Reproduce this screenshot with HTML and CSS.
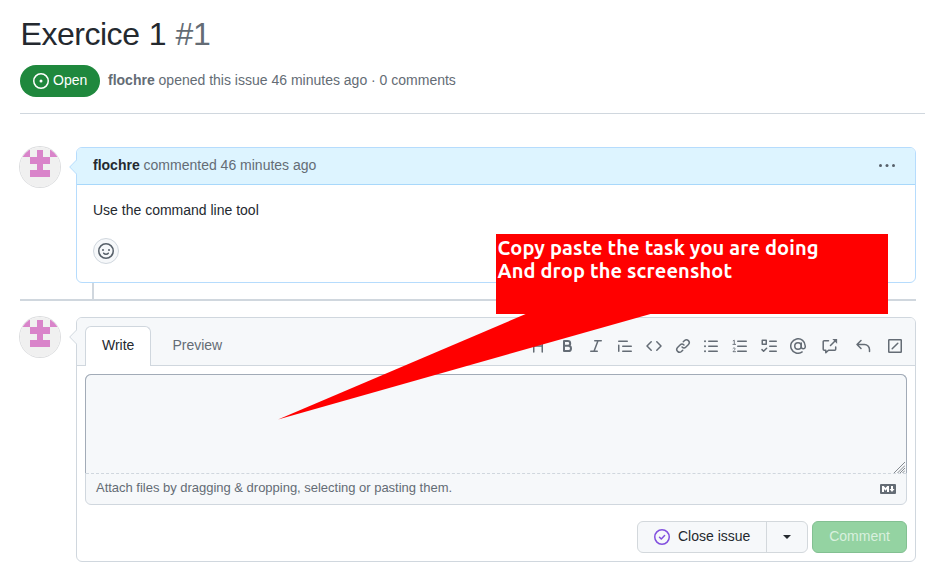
FILE: index.html
```
<!DOCTYPE html>
<html lang="en">
<head>
<meta charset="utf-8">
<title>Exercice 1 · Issue #1</title>
<link rel="stylesheet" href="styles.css">
</head>
<body>
<svg class="sprite" aria-hidden="true">
  <symbol id="avatar" viewBox="0 0 40 40">
    <rect width="40" height="40" fill="#f0f0f0"/>
    <path fill="#d984ca" d="M0 3h10v7H0zM30 3h10v7H30zM17 3h6v7h7v7h-7v6h7v7H10v-7h7v-6h-7v-7h7z"/>
  </symbol>
</svg>
<header class="issue-header">
  <h1 class="title">Exercice 1 <span class="number">#1</span></h1>
  <div class="meta">
    <span class="state"><svg class="icon" viewBox="0 0 16 16"><circle cx="8" cy="8" r="7.25"/><circle class="solid" cx="8" cy="8" r="1.5"/></svg><span class="state-label">Open</span></span>
    <span class="summary"><b>flochre</b> opened this issue 46 minutes ago · 0 comments</span>
  </div>
</header>
<main class="timeline">
  <div class="row">
    <svg class="avatar" viewBox="0 0 40 40"><use href="#avatar" width="40" height="40"/></svg>
    <article class="box comment">
      <svg class="caret" viewBox="0 0 8 16"><path d="M8 0.5 L0.7 8 L8 15.5"/></svg>
      <div class="comment-head">
        <span><b>flochre</b> commented 46 minutes ago</span>
        <svg class="icon kebab" viewBox="0 0 16 16"><g class="solid"><circle cx="1.5" cy="8.5" r="1.5"/><circle cx="8" cy="8.5" r="1.5"/><circle cx="14.5" cy="8.5" r="1.5"/></g></svg>
      </div>
      <div class="comment-body">
        <p>Use the command line tool</p>
        <button class="react" aria-label="Add reaction"><svg class="icon" viewBox="0 0 16 16"><circle cx="8" cy="8" r="7.25"/><circle class="solid" cx="5" cy="7" r="1"/><circle class="solid" cx="11" cy="7" r="1"/><path d="M5.7 10.2c1.1 1.4 3.5 1.4 4.6 0"/></svg></button>
      </div>
    </article>
  </div>
  <div class="thread-line"></div>
  <div class="row">
    <svg class="avatar" viewBox="0 0 40 40"><use href="#avatar" width="40" height="40"/></svg>
    <section class="box editor">
      <svg class="caret" viewBox="0 0 8 16"><path d="M8 0.5 L0.7 8 L8 15.5"/></svg>
      <div class="editor-head">
        <nav class="tabs"><span class="tab active">Write</span><span class="tab">Preview</span></nav>
        <div class="toolbar">
          <svg class="icon" viewBox="0 0 16 16"><path d="M3.75 2v12M12.25 2v12M3.75 8h8.5"/></svg>
          <svg class="icon bold" viewBox="0 0 16 16"><path d="M5 3h3.8a2.4 2.4 0 0 1 0 4.8H5zM5 7.8h4.4a2.6 2.6 0 0 1 0 5.2H5z"/></svg>
          <svg class="icon" viewBox="0 0 16 16"><path d="M6.75 2.75h6.5M2.75 13.25h6.5M10 2.75l-4 10.5"/></svg>
          <svg class="icon" viewBox="0 0 16 16"><path d="M1.75 7.3v6M1.75 3.25h8.5M5.75 8.25h8.5M5.75 13.25h8.5"/></svg>
          <svg class="icon" viewBox="0 0 16 16"><path d="M5.2 3.8 1 8l4.2 4.2M10.8 3.8 15 8l-4.2 4.2"/></svg>
          <svg class="icon" viewBox="0 0 16 16"><path d="M8.3 3.8l1.25-1.25a2.76 2.76 0 0 1 3.9 3.9l-2.5 2.5a2.76 2.76 0 0 1-3.9 0M7.7 12.2l-1.25 1.25a2.76 2.76 0 0 1-3.9-3.9l2.5-2.5a2.76 2.76 0 0 1 3.9 0"/></svg>
          <svg class="icon" viewBox="0 0 16 16"><path d="M5.75 3.25h8.5M5.75 8.25h8.5M5.75 13.25h8.5"/><g class="solid"><circle cx="2" cy="3.25" r="1"/><circle cx="2" cy="8.25" r="1"/><circle cx="2" cy="13.25" r="1"/></g></svg>
          <svg class="icon" viewBox="0 0 16 16"><path d="M5.75 3.25h8.5M5.75 8.25h8.5M5.75 13.25h8.5"/><path class="thin" d="M1.2 2.8l1.1-.6v4M.9 6.4h2.7M1 10.4c.5-.8 2.2-.6 2.2.5 0 .9-1.7 1.5-2.2 2.8h2.5"/></svg>
          <svg class="icon" viewBox="0 0 16 16"><path d="M1.25 2.25h4v4h-4zM1 11.6l1.6 1.6 3-3M8.75 3.25h6.5M8.75 8.25h6.5M8.75 13.25h6.5"/></svg>
          <svg class="icon" viewBox="0 0 16 16"><circle cx="8" cy="8" r="3.25"/><path d="M11.25 5v3.75a1.95 1.95 0 0 0 4 0V8a7.25 7.25 0 1 0-3.1 5.95"/></svg>
          <svg class="icon gap" viewBox="0 0 16 16"><path d="M6.5 2.75H2.2a.95.95 0 0 0-1 1v7.5a1 1 0 0 0 1 1h1.6v2.5l2.7-2.5h6.2a1 1 0 0 0 1-1V9M8.5 7.5l5-5"/><path class="solid" d="M10.3.9h4.8v4.8z"/></svg>
          <svg class="icon gap" viewBox="0 0 16 16"><path d="M6 2.5 2 6.5l4 4M2 6.5h7.5a5 5 0 0 1 5 5v2"/></svg>
          <svg class="icon gap" viewBox="0 0 16 16"><rect x="1.75" y="1.75" width="12.5" height="12.5" rx=".5"/><path d="M5.2 10.8l5.6-5.6"/></svg>
        </div>
      </div>
      <div class="field">
        <div class="input"><svg class="grip" viewBox="0 0 11 11"><path d="M0 11 11 0M3.5 11 11 3.5M6 11l5-5M8.5 11 11 8.5"/></svg></div>
        <div class="attach">
          <span>Attach files by dragging &amp; dropping, selecting or pasting them.</span>
          <svg class="markdown" viewBox="0 0 16 10"><rect width="16" height="10" rx="1" fill="#646c75"/><path fill="#fff" d="M2 8V2h1.800L5.500 4 7.200 2H9v6H7V5L5.500 6.700 4 5v3zM11 2h2v3h1.500L12 8 9.500 5H11z"/></svg>
        </div>
      </div>
      <div class="actions">
        <div class="split"><span class="close"><svg class="icon" viewBox="0 0 16 16"><circle cx="8" cy="8" r="7.250"/><path d="M5.500 8.200l1.800 1.800 3.300-3.400"/></svg>Close issue</span><span class="drop"></span></div>
        <button class="submit">Comment</button>
      </div>
    </section>
  </div>
</main>
<aside class="callout">
  <svg class="pointer" viewBox="0 0 380 108"><path d="M250 0 0 106.500 376 0z"/></svg>
  <div class="line">Copy paste the task you are doing</div>
  <div class="line">And drop the screenshot</div>
</aside>
</body>
</html>
```
FILE: styles.css
```
* { box-sizing: border-box; }
body {
  margin: 0; height: 569px; overflow: hidden; position: relative;
  background: #fff; color: #24292f;
  font: 14px/21px "Liberation Sans", Arial, sans-serif;
}
svg { display: block; flex: none; }
p { margin: 0; }
button { font: inherit; padding: 0; }
.sprite { position: absolute; width: 0; height: 0; }
.icon { width: 16px; height: 16px; fill: none; stroke: currentColor; stroke-width: 1.5; stroke-linecap: round; stroke-linejoin: round; }
.solid { fill: currentColor; stroke: none; }
.issue-header { margin-left: 20px; height: 114px; border-bottom: 1px solid #d0d7de; }
.title { margin: 0; padding: 16px 0 0 .6px; height: 65px; font-size: 32px; line-height: 36px; font-weight: 400; letter-spacing: -.48px; word-spacing: 1px; }
.number { color: #646c75; }
.meta { display: flex; align-items: center; gap: 8px; color: #646c75; }
.state {
  display: flex; align-items: center; gap: 4px; width: 80px; height: 32px;
  padding-left: 13px; border-radius: 16px; background: #1f883d; color: #fff;
}
.state, .summary { line-height: 20px; }
.state-label, .summary { padding-bottom: 2px; }
.timeline { padding: 33px 9px 0 20px; }
.row { display: flex; align-items: flex-start; gap: 16px; }
.avatar { width: 40px; height: 40px; border-radius: 50%; box-shadow: 0 0 0 1px #dcdddf; }
.box { position: relative; flex: 1; border: 1px solid #d0d7de; border-radius: 6px; }
.caret { position: absolute; left: -8px; top: 11px; width: 8px; height: 16px; fill: #f6f8fa; stroke: #d0d7de; }
.comment { height: 136px; border-color: #b6dcfd; }
.comment .caret { fill: #ddf4ff; stroke: #b6dcfd; }
.comment-head {
  display: flex; align-items: center; justify-content: space-between; height: 37px;
  padding: 0 20px 2px 16px; border-bottom: 1px solid #a8d8fb; border-radius: 5px 5px 0 0;
  background: #ddf4ff; color: #646c75;
}
.comment-head b { color: #24292f; }
.kebab { color: #57606a; }
.comment-body { padding: 15px 16px; }
.react {
  display: flex; align-items: center; justify-content: center; width: 26px; height: 26px;
  margin-top: 17px; border: 1px solid #d0d7de; border-radius: 50%; background: #f6f8fa; color: #57606a;
}
.thread-line { height: 34px; }
.thread-line::before { content: ""; display: block; height: 16px; border-bottom: 2px solid #d0d7de; background: linear-gradient(#d0d7de, #d0d7de) 72px 0 / 2px 16px no-repeat; }
.editor { height: 245px; }
.editor-head { display: flex; height: 48px; justify-content: space-between; padding: 8px 12px 0 8px; border-bottom: 1px solid #d0d7de; border-radius: 5px 5px 0 0; background: #f6f8fa; }
.tabs { display: flex; }
.tab { height: 40px; padding: 8px 20px; border: 1px solid transparent; color: #646c75; }
.tab.active { padding: 8px 16px; border-color: #d0d7de; border-bottom: 0; border-radius: 6px 6px 0 0; background: #fff; color: #24292f; }
.toolbar { display: flex; align-items: center; gap: 12.9px; color: #646c75; }
.toolbar .gap { margin-left: 3.4px; }
.bold { stroke-width: 2; }
.thin { stroke-width: .9; }
.field { height: 131px; margin: 8px; border: 1px solid #d0d7de; border-radius: 6px; background: #f6f8fa; }
.input { display: flex; align-items: flex-end; justify-content: flex-end; height: 99px; margin: -1px -1px 0; padding: 0 1px 0; border: 1px solid #a2abb7; border-bottom: 0; border-radius: 6px 6px 0 0; }
.grip { width: 11px; height: 11px; fill: none; stroke: #858a90; }
.attach { display: flex; align-items: center; justify-content: space-between; height: 30px; padding: 0 10px 2px; border-top: 1px dashed #d0d7de; font-size: 13px; letter-spacing: -.015px; color: #646c75; }
.markdown { width: 16px; height: 10px; margin-top: 3px; }
.actions { display: flex; justify-content: flex-end; gap: 4px; margin: 16px 8px 0; }
.split { display: flex; width: 171px; height: 32px; border: 1px solid #d3d8dc; border-radius: 6px; background: #f6f8fa; }
.close { display: flex; align-items: center; gap: 8px; width: 129px; padding: 0 0 1px 16px; border-right: 1px solid #d3d8dc; }
.close .icon { margin-top: 1px; color: #8250df; }
.drop { display: flex; flex: 1; align-items: center; justify-content: center; }
.drop::after { content: ""; border: 4px solid transparent; border-top-color: #24292f; border-bottom: 0; }
.submit { width: 95px; height: 32px; padding-bottom: 2px; border: 1px solid #83c092; border-radius: 6px; background: #94d3a2; color: #d9f0de; }
.callout { position: absolute; left: 496px; top: 234px; width: 392px; height: 80px; padding: 2px 1.5px; background: #f00; color: #fff; font: bold 20px/23px Ubuntu, "Noto Sans", sans-serif; letter-spacing: .13px; white-space: nowrap; }
.line { width: max-content; height: 23px; }
.pointer { position: absolute; left: -218px; top: 79px; width: 380px; height: 108px; fill: #f00; }
```
